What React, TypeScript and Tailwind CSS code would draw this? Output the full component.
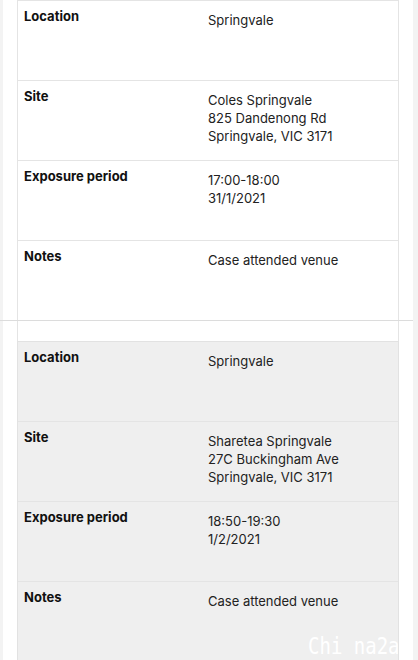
const exposures = [
  {
    location: "Springvale",
    site: ["Coles Springvale", "825 Dandenong Rd", "Springvale, VIC 3171"],
    period: ["17:00-18:00", "31/1/2021"],
    notes: "Case attended venue",
  },
  {
    location: "Springvale",
    site: ["Sharetea Springvale", "27C Buckingham Ave", "Springvale, VIC 3171"],
    period: ["18:50-19:30", "1/2/2021"],
    notes: "Case attended venue",
  },
];

function Row({ label, lines, last, tall }: { label: string; lines: string[]; last?: boolean; tall?: boolean }) {
  return (
    <div
      className={`grid grid-cols-[183px_1fr] ${tall ? "h-[100px]" : "h-[80px]"} ${last ? "" : "border-b border-[#e4e4e4]"}`}
    >
      <div className="pl-[6px] pt-[6px] text-[13px] leading-[18px] font-bold text-[#111]">{label}</div>
      <div className="pl-[7px] pt-[10px] text-[13px] leading-[18px] text-[#222]">
        {lines.map((l) => (
          <div key={l}>{l}</div>
        ))}
      </div>
    </div>
  );
}

export default function App() {
  const [a, b] = exposures;
  return (
    <div
      className="relative flex w-[418px] h-[660px] overflow-hidden bg-white"
      style={{ fontFamily: "Inter, 'Noto Sans', sans-serif" }}
    >
      <div className="w-[3px] bg-[#f3f3f3]" />
      <div className="w-[410px] px-[14px]">
        {/* first exposure site */}
        <div className="border-x border-t border-[#e4e4e4] bg-white">
          <Row label="Location" lines={[a.location]} />
          <Row label="Site" lines={a.site} />
          <Row label="Exposure period" lines={a.period} />
          <Row label="Notes" lines={[a.notes]} last tall />
        </div>

        {/* second exposure site */}
        <div className="relative overflow-hidden border-x border-t border-[#e2e2e2] bg-[#efefef]">
          <Row label="Location" lines={[b.location]} />
          <Row label="Site" lines={b.site} />
          <Row label="Exposure period" lines={b.period} />
          <Row label="Notes" lines={[b.notes]} last />
          <div
            className="absolute left-[290px] bottom-[4px] text-[19px] leading-none text-white scale-y-125 origin-bottom whitespace-nowrap"
            style={{ fontFamily: "'DejaVu Sans Mono', monospace" }}
          >
            Chi na2a
          </div>
        </div>
      </div>
      <div className="w-[5px] bg-[#f3f3f3]" />

      {/* seam line across the page */}
      <div className="absolute left-0 top-[320px] w-[413px] h-px bg-[#dcdcdc]" />
    </div>
  );
}
